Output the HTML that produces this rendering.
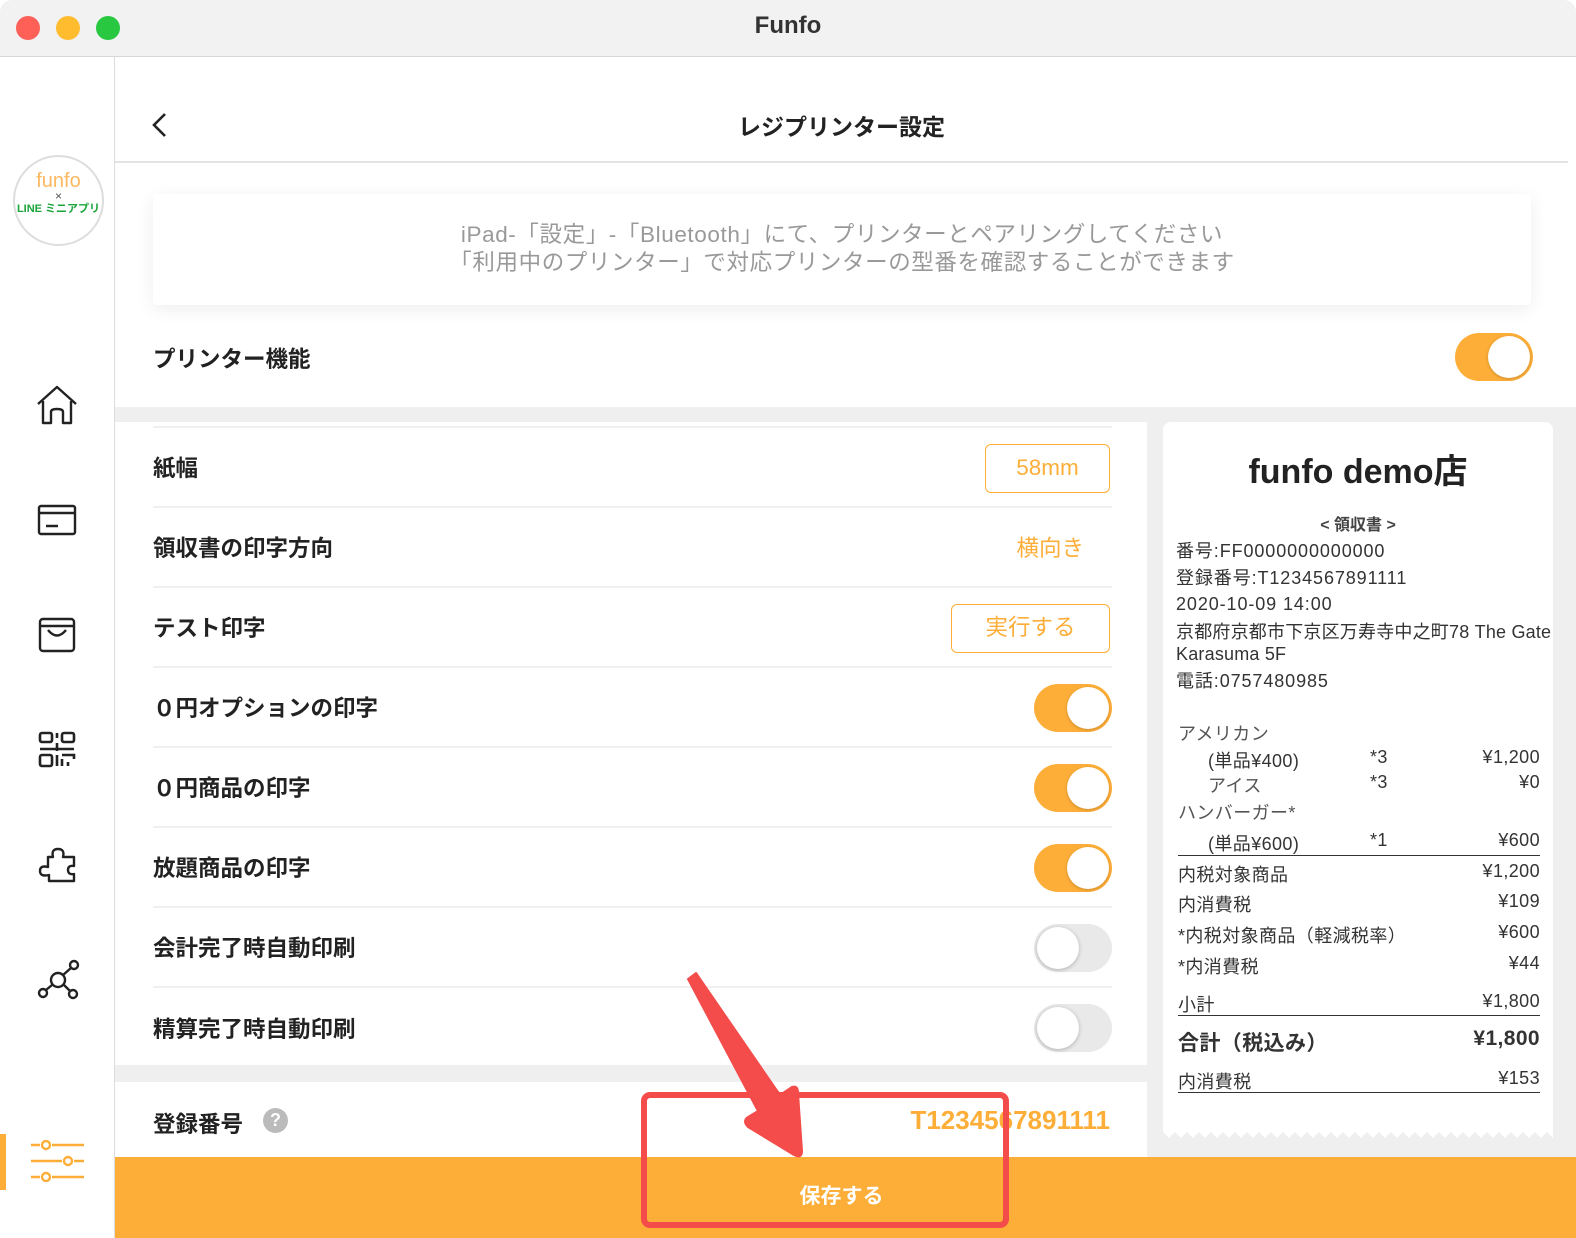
<!DOCTYPE html>
<html><head><meta charset="utf-8"><style>
*{margin:0;padding:0;box-sizing:border-box}
body{width:1576px;height:1238px;overflow:hidden;background:#fff;font-family:"Liberation Sans","Noto Sans CJK JP",sans-serif;color:#222;position:relative}
.abs{position:absolute}
.tb{left:0;top:0;width:1576px;height:57px;background:#f2f2f2;border-bottom:1px solid #d8d8d8;border-radius:12px 12px 0 0}
.dot{top:16px;width:24px;height:24px;border-radius:50%}
.side{left:0;top:57px;width:115px;height:1181px;background:#fff;border-right:1px solid #ddd}
.row{position:absolute;left:153px;width:959px;height:80px;border-bottom:2px solid #f0f0f0;font-size:22.5px;font-weight:bold;display:flex;align-items:center}
.tg{position:absolute;right:0;top:16px;width:78px;height:48px;border-radius:24px;background:#fdae38}
.tg::after{content:"";position:absolute;right:3px;top:3px;width:42px;height:42px;border-radius:50%;background:#fff;box-shadow:0 1px 3px rgba(0,0,0,.2)}
.tg.off{background:#e9e9e9}
.tg.off::after{right:auto;left:3px;box-shadow:0 1px 4px rgba(0,0,0,.25)}
.r{position:absolute;left:1178px;width:362px;font-size:18px;color:#333;letter-spacing:.4px}
.r span{float:right}
.ic{position:absolute;left:36px}
</style></head><body>
<div class="abs tb"></div>
<div class="abs dot" style="left:16px;background:#fe5f57"></div>
<div class="abs dot" style="left:56px;background:#febc2e"></div>
<div class="abs dot" style="left:96px;background:#28c840"></div>
<div class="abs" style="left:0;width:1576px;top:12px;text-align:center;font-size:24px;font-weight:bold;color:#333">Funfo</div>

<div class="abs side"></div>
<div class="abs" style="left:13px;top:155px;width:91px;height:91px;border-radius:50%;border:2px solid #ddd;text-align:center">
<div style="color:#fdb860;font-size:20px;margin-top:14px;line-height:20px;font-weight:300">funfo</div>
<div style="font-size:12px;line-height:10px;color:#555">×</div>
<div style="color:#1aa43a;font-size:11px;font-weight:bold;line-height:16px">LINE ミニアプリ</div></div>
<svg class="ic" style="top:384px" width="42" height="42" viewBox="0 0 42 42" fill="none" stroke="#222" stroke-width="2.4" stroke-linejoin="round"><path d="M2 20 L21 3 L40 20 M7 17 V39 H15 V28 Q15 25 21 25 Q27 25 27 28 V39 H35 V17"/></svg>
<svg class="ic" style="top:503px" width="42" height="34" viewBox="0 0 42 34" fill="none" stroke="#222" stroke-width="2.4"><rect x="3" y="3" width="36" height="28" rx="2"/><path d="M3 10 H39 M10 23 H22"/></svg>
<svg class="ic" style="top:616px" width="42" height="38" viewBox="0 0 42 38" fill="none" stroke="#222" stroke-width="2.4"><rect x="4" y="3" width="34" height="32" rx="3"/><path d="M4 10 H38 M12 14 Q21 25 30 14"/></svg>
<svg class="ic" style="top:729px" width="42" height="42" viewBox="0 0 42 42" fill="none" stroke="#222" stroke-width="2.6"><rect x="4" y="4" width="12" height="9" rx="2"/><rect x="26" y="4" width="12" height="9" rx="2"/><rect x="4" y="26" width="12" height="11" rx="2"/><path d="M21 4 V9 M21 14 V22 M4 20 H38 M21 26 V37 M26 26 H38 V30 M26 30 V37 M32 33 V37"/></svg>
<svg class="ic" style="top:843px" width="42" height="42" viewBox="0 0 42 42" fill="none" stroke="#222" stroke-width="2.4" stroke-linejoin="round"><path d="M12 14 H17 Q15 6 22 6 Q29 6 27 14 H38 V23 Q32 22 32 27 Q32 32 38 31 V38 H13 V32 Q4 34 4 28 Q4 22 12 24 Z"/></svg>
<svg class="ic" style="top:958px" width="46" height="42" viewBox="0 0 46 42" fill="none" stroke="#222" stroke-width="2.4"><circle cx="22" cy="22" r="7"/><circle cx="38" cy="7" r="4"/><circle cx="7" cy="35" r="4"/><circle cx="37" cy="36" r="4"/><path d="M27 17 L35 10 M16 27 L10 32 M28 27 L34 33"/></svg>
<div class="abs" style="left:0;top:1134px;width:6px;height:56px;background:#fdae38"></div>
<svg class="abs" style="left:30px;top:1140px" width="55" height="42" viewBox="0 0 55 42" fill="none" stroke="#fdae38" stroke-width="2.4"><path d="M1 5 H10 M22 5 H54 M1 21 H32 M44 21 H54 M1 37 H10 M22 37 H54"/><circle cx="16" cy="5" r="4"/><circle cx="38" cy="21" r="4"/><circle cx="16" cy="37" r="4"/></svg>

<!-- header -->
<svg class="abs" style="left:150px;top:112px" width="20" height="26" viewBox="0 0 20 26" fill="none" stroke="#222" stroke-width="2.6"><path d="M15 2 L4 13 L15 24"/></svg>
<div class="abs" style="left:115px;width:1453px;top:108px;text-align:center;font-size:23px;font-weight:bold">レジプリンター設定</div>
<div class="abs" style="left:115px;top:161px;width:1453px;height:2px;background:#e4e4e4"></div>
<div class="abs" style="left:153px;top:194px;width:1378px;height:111px;background:#fff;box-shadow:0 4px 18px rgba(0,0,0,.07);border-radius:4px;text-align:center;color:#999;font-size:22.5px;line-height:28px;padding-top:27px;letter-spacing:.6px">iPad-「設定」-「Bluetooth」にて、プリンターとペアリングしてください<br>「利用中のプリンター」で対応プリンターの型番を確認することができます</div>
<div class="abs" style="left:153px;top:342px;font-size:22.5px;font-weight:bold">プリンター機能</div>
<div class="abs" style="left:1455px;top:333px;width:78px;height:48px"><div class="tg" style="top:0"></div></div>

<!-- grey area -->
<div class="abs" style="left:115px;top:407px;width:1461px;height:755px;background:#efefef"></div>
<div class="abs" style="left:115px;top:422px;width:1032px;height:643px;background:#fff"></div>
<div class="abs" style="left:153px;top:426px;width:959px;height:2px;background:#f0f0f0"></div>
<div class="row" style="top:428px">紙幅<div style="position:absolute;right:2px;top:16px;width:125px;height:49px;border:1.5px solid #fdae38;border-radius:6px;color:#fdae38;font-weight:normal;text-align:center;line-height:46px">58mm</div></div>
<div class="row" style="top:508px">領収書の印字方向<div style="position:absolute;right:28px;color:#fdae38;font-weight:normal">横向き</div></div>
<div class="row" style="top:588px">テスト印字<div style="position:absolute;right:2px;top:16px;width:159px;height:49px;border:1.5px solid #fdae38;border-radius:6px;color:#fdae38;font-weight:normal;text-align:center;line-height:46px">実行する</div></div>
<div class="row" style="top:668px">０円オプションの印字<div class="tg"></div></div>
<div class="row" style="top:748px">０円商品の印字<div class="tg"></div></div>
<div class="row" style="top:828px">放題商品の印字<div class="tg"></div></div>
<div class="row" style="top:908px">会計完了時自動印刷<div class="tg off"></div></div>
<div class="row" style="top:988px;border:none">精算完了時自動印刷<div class="tg off"></div></div>

<div class="abs" style="left:115px;top:1082px;width:1032px;height:80px;background:#fff"></div>
<div class="abs" style="left:153px;top:1107px;font-size:22.5px;font-weight:bold">登録番号</div>
<div class="abs" style="left:263px;top:1108px;width:25px;height:25px;border-radius:50%;background:#bbb;color:#fff;font-size:18px;font-weight:bold;text-align:center;line-height:25px">?</div>
<div class="abs" style="left:800px;width:310px;top:1105px;text-align:right;font-size:26px;font-weight:bold;color:#fdae38">T1234567891111</div>

<!-- receipt -->
<div class="abs" style="left:1163px;top:422px;width:390px;height:710px;background:#fff;border-radius:8px 8px 0 0"></div>
<svg class="abs" style="left:1163px;top:1124px" width="390" height="14"><pattern id="z" width="12" height="14" patternUnits="userSpaceOnUse"><path d="M0 0 H12 V8 L6 14 L0 8Z" fill="#fff"/></pattern><rect width="390" height="14" fill="url(#z)"/></svg>
<div class="abs" style="left:1163px;width:390px;top:444px;text-align:center;font-size:34px;font-weight:bold;color:#222">funfo demo店</div>
<div class="abs" style="left:1163px;width:390px;top:511px;text-align:center;font-size:16px;font-weight:bold;color:#444">&lt; 領収書 &gt;</div>
<div class="abs" style="left:1176px;top:538px;font-size:18px;color:#333;line-height:26.5px;width:380px;letter-spacing:.9px;white-space:nowrap">番号:FF0000000000000<br>登録番号:T1234567891111<br>2020-10-09 14:00<br><span style="line-height:22px;display:block;padding-top:3px;letter-spacing:.2px">京都府京都市下京区万寿寺中之町78 The Gate<br>Karasuma 5F</span><span style="display:block;padding-top:3px">電話:0757480985</span></div>
<div class="r" style="top:720px;color:#555">アメリカン</div>
<div class="r" style="top:747px"><b style="font-weight:normal;margin-left:30px">(単品¥400)</b><b style="font-weight:normal;position:absolute;left:192px">*3</b><span>¥1,200</span></div>
<div class="r" style="top:772px"><b style="font-weight:normal;margin-left:30px;color:#555">アイス</b><b style="font-weight:normal;position:absolute;left:192px">*3</b><span>¥0</span></div>
<div class="r" style="top:799px;color:#555">ハンバーガー*</div>
<div class="r" style="top:830px;border-bottom:1.5px solid #333;height:26px"><b style="font-weight:normal;margin-left:30px">(単品¥600)</b><b style="font-weight:normal;position:absolute;left:192px">*1</b><span>¥600</span></div>
<div class="r" style="top:861px">内税対象商品<span>¥1,200</span></div>
<div class="r" style="top:891px">内消費税<span>¥109</span></div>
<div class="r" style="top:922px">*内税対象商品（軽減税率）<span>¥600</span></div>
<div class="r" style="top:953px">*内消費税<span>¥44</span></div>
<div class="r" style="top:991px;border-bottom:1.5px solid #333;height:25px">小計<span>¥1,800</span></div>
<div class="r" style="top:1027px;font-size:21px;font-weight:bold">合計（税込み）<span>¥1,800</span></div>
<div class="r" style="top:1068px;border-bottom:1.5px solid #333;height:25px">内消費税<span>¥153</span></div>

<!-- bottom bar -->
<div class="abs" style="left:115px;top:1157px;width:1461px;height:81px;background:#fdae38"></div>
<div class="abs" style="left:115px;width:1453px;top:1180px;text-align:center;color:#fff;font-size:21px;font-weight:bold">保存する</div>
<div class="abs" style="left:641px;top:1092px;width:368px;height:136px;border:6px solid #f44c4a;border-radius:9px"></div>
<svg class="abs" style="left:680px;top:965px" width="130" height="200" viewBox="0 0 130 200"><path d="M8 14 L16 8 L100 130 L112 122 Q118 120 118 128 L122 186 Q122 194 114 190 L68 162 Q62 156 68 152 L78 146 Z" fill="#f44c4a" stroke="#f44c4a" stroke-width="2" stroke-linejoin="round"/></svg>
</body></html>
